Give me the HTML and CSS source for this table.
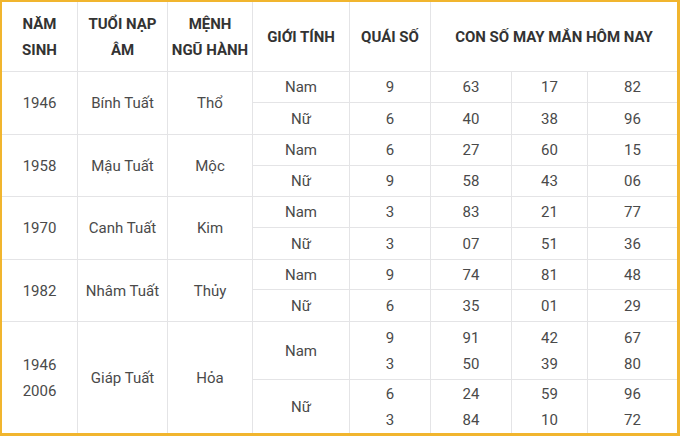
FILE: index.html
```html
<!DOCTYPE html>
<html lang="vi">
<head>
<meta charset="utf-8">
<title>Con số may mắn tuổi Tuất</title>
<link rel="stylesheet" href="styles.css">
</head>
<body>
<div class="frame">
  <div class="grid">
    <div class="cell head">NĂM<br>SINH</div>
    <div class="cell head">TUỔI NẠP<br>ÂM</div>
    <div class="cell head">MỆNH<br>NGŨ HÀNH</div>
    <div class="cell head">GIỚI TÍNH</div>
    <div class="cell head">QUÁI SỐ</div>
    <div class="cell head span3">CON SỐ MAY MẮN HÔM NAY</div>

    <div class="cell group">1946</div>
    <div class="cell group">Bính Tuất</div>
    <div class="cell group">Thổ</div>
    <div class="cell">Nam</div><div class="cell">9</div><div class="cell">63</div><div class="cell">17</div><div class="cell">82</div>
    <div class="cell">Nữ</div><div class="cell">6</div><div class="cell">40</div><div class="cell">38</div><div class="cell">96</div>

    <div class="cell group">1958</div>
    <div class="cell group">Mậu Tuất</div>
    <div class="cell group">Mộc</div>
    <div class="cell">Nam</div><div class="cell">6</div><div class="cell">27</div><div class="cell">60</div><div class="cell">15</div>
    <div class="cell">Nữ</div><div class="cell">9</div><div class="cell">58</div><div class="cell">43</div><div class="cell">06</div>

    <div class="cell group">1970</div>
    <div class="cell group">Canh Tuất</div>
    <div class="cell group">Kim</div>
    <div class="cell">Nam</div><div class="cell">3</div><div class="cell">83</div><div class="cell">21</div><div class="cell">77</div>
    <div class="cell">Nữ</div><div class="cell">3</div><div class="cell">07</div><div class="cell">51</div><div class="cell">36</div>

    <div class="cell group">1982</div>
    <div class="cell group">Nhâm Tuất</div>
    <div class="cell group">Thủy</div>
    <div class="cell">Nam</div><div class="cell">9</div><div class="cell">74</div><div class="cell">81</div><div class="cell">48</div>
    <div class="cell">Nữ</div><div class="cell">6</div><div class="cell">35</div><div class="cell">01</div><div class="cell">29</div>

    <div class="cell group">1946<br>2006</div>
    <div class="cell group">Giáp Tuất</div>
    <div class="cell group">Hỏa</div>
    <div class="cell">Nam</div><div class="cell">9<br>3</div><div class="cell">91<br>50</div><div class="cell">42<br>39</div><div class="cell">67<br>80</div>
    <div class="cell">Nữ</div><div class="cell">6<br>3</div><div class="cell">24<br>84</div><div class="cell">59<br>10</div><div class="cell">96<br>72</div>
  </div>
</div>
</body>
</html>
```

FILE: styles.css
```css
html, body {
  margin: 0;
  padding: 0;
  background: #ffffff;
}

.frame {
  width: 680px;
  height: 436px;
  box-sizing: border-box;
  border-style: solid;
  border-color: #f1b52e;
  border-width: 2px 3px 3px 2px;
  background: #ffffff;
  overflow: hidden;
}

.grid {
  display: grid;
  grid-template-columns: 75px 89px 84px 96px 80px 80px 75px 89px;
  grid-template-rows: 69px 30px 31px 30px 30px 30px 31px 29px 31px 57px 53px;
  gap: 1px;
  background: #e4e4e6;
  font-family: Roboto, "Liberation Sans", Arial, sans-serif;
  font-size: 15px;
  line-height: 26px;
  color: #4a4a4a;
}

.cell {
  background: #ffffff;
  display: flex;
  align-items: center;
  justify-content: center;
  text-align: center;
}

.head {
  font-weight: 700;
  color: #333333;
}

.span3 {
  grid-column: span 3;
}

.group {
  grid-row: span 2;
}
```
